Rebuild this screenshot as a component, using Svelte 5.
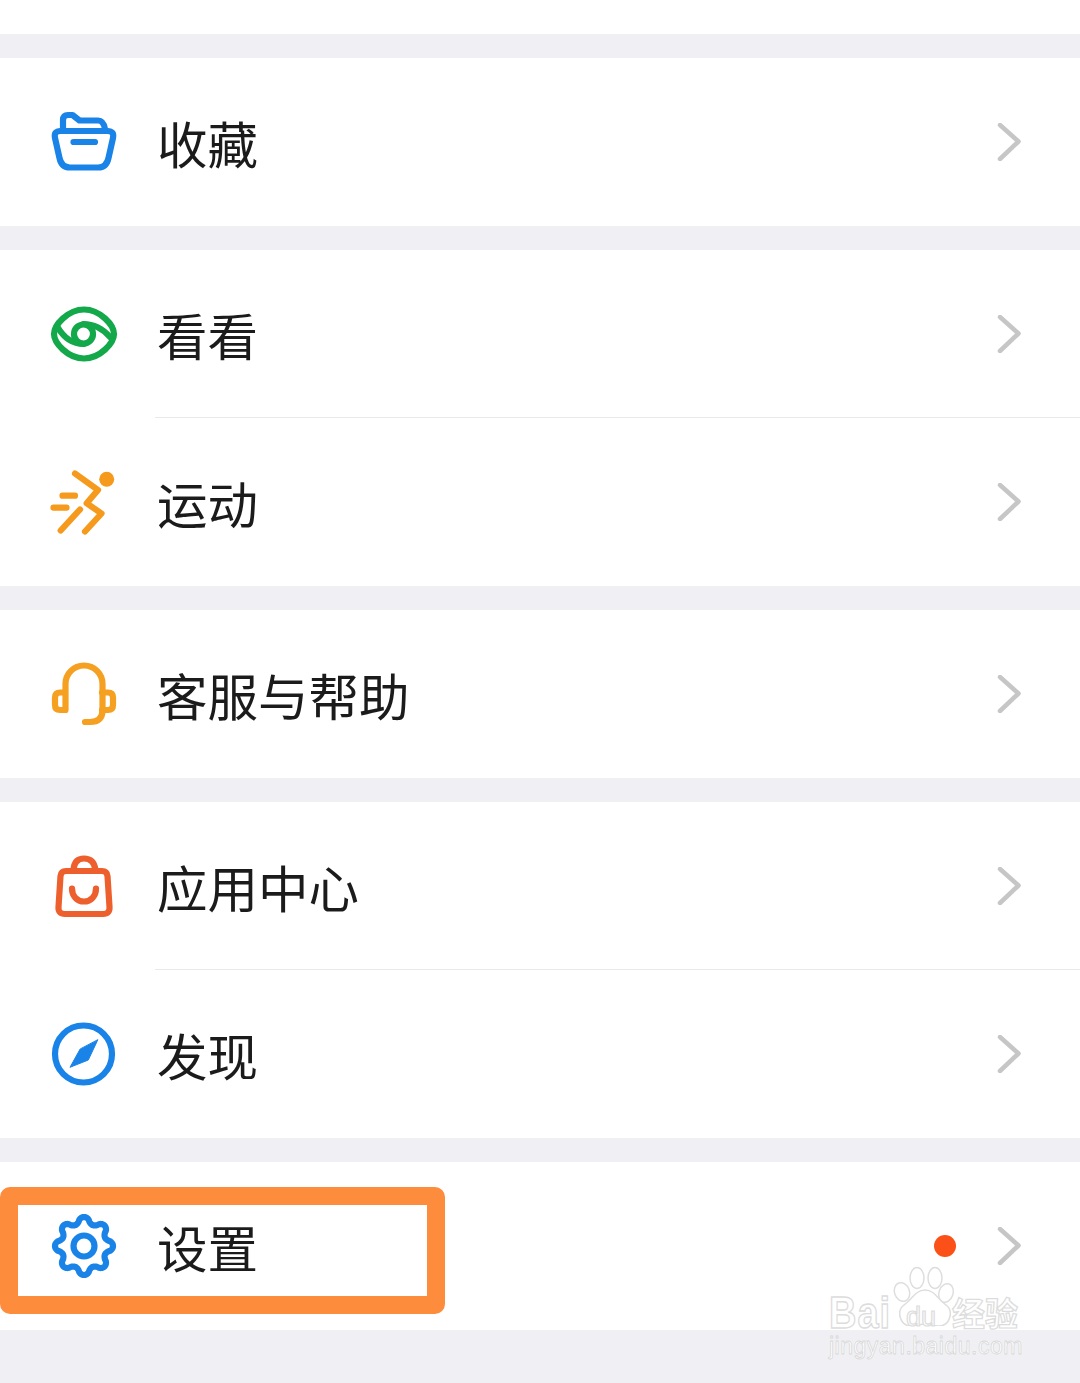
<script>
  // gear outline: 8 soft teeth around the centre of a 68 box
  let gear = "";
  for (let i = 0; i <= 240; i++) {
    const a = (i / 240) * Math.PI * 2;
    const c = Math.cos(8 * a);
    const r = 25.8 + 3.2 * Math.sign(c) * Math.pow(Math.abs(c), 0.7);
    gear += (i ? "L" : "M") + (34 + r * Math.sin(a)).toFixed(2) + " " + (34 - r * Math.cos(a)).toFixed(2);
  }
  gear += "Z";

  const groups = [
    [{ id: "fav", label: "收藏" }],
    [{ id: "eye", label: "看看" }, { id: "run", label: "运动" }],
    [{ id: "help", label: "客服与帮助" }],
    [{ id: "bag", label: "应用中心" }, { id: "compass", label: "发现" }],
    [{ id: "gear", label: "设置", dot: true, marked: true }],
  ];
</script>

<div class="page">
  <div class="top"></div>
  {#each groups as group}
    <div class="gap"></div>
    <section>
      {#each group as item, i}
        {#if i > 0}<div class="divider"></div>{/if}
        <div class="row">
          <svg class="icon" viewBox="0 0 68 68" fill="none" stroke-width="6.2" stroke-linecap="round" stroke-linejoin="round">
            {#if item.id === "fav"}
              <g stroke="#1a83e8">
                <path d="M10.500 23H57.500Q64.500 23 63 30L58.500 50Q56.500 59.500 48 59.500H20Q11.500 59.500 9.500 50L5 30Q3.500 23 10.500 23Z" />
                <path d="M13 22V12Q13 7 18 7H22.500L29.500 12.500H48Q53.500 12.500 55 21" />
                <path d="M23.500 34H45" />
              </g>
            {:else if item.id === "eye"}
              <g stroke="#13a84a">
                <path d="M34 9.500C50 9.500 64 25 64 34C64 43 50 58.500 34 58.500C18 58.500 4 43 4 34C4 25 18 9.500 34 9.500Z" />
                <circle cx="33.500" cy="34" r="9.500" />
                <path d="M7.500 27C14 38 22 44 33.500 44" />
                <path d="M33.500 24C44 24 53 29 60 37" />
              </g>
            {:else if item.id === "run"}
              <g stroke="#f59a1c">
                <path d="M25 5.500L48 22L36.700 35.300L51.500 45.500L35 63.500" />
                <path d="M12.500 27.700H25" />
                <path d="M3.500 39.700H16.500" />
                <path d="M30 41.500L10.700 62.500" />
              </g>
              <circle cx="56.700" cy="11.300" r="7.500" fill="#f59a1c" />
            {:else if item.id === "help"}
              <g stroke="#f5a021">
                <path d="M15.500 50V24A18.500 18.500 0 0 1 52.500 24V50Q52.500 62 40 62H35" />
                <path d="M15 32.500H10Q5 32.500 5 37.500V45Q5 50 10 50H15" />
                <path d="M52 32.500H58Q63 32.500 63 37.500V45Q63 50 58 50H52" />
              </g>
            {:else if item.id === "bag"}
              <g stroke="#ee5f2e">
                <path d="M16 19H52Q57 19 57.500 24L59.500 55Q60 62 53 62H15Q8 62 8.500 55L10.500 24Q11 19 16 19Z" />
                <path d="M23.500 18C24 10 28 6.500 34 6.500C40 6.500 44.500 10 45.500 18" />
                <path d="M22 36.500C22 44 27 49.500 34 49.500C41 49.500 46 44 46 36.500" />
              </g>
            {:else if item.id === "compass"}
              <circle cx="33.500" cy="34" r="28.500" stroke="#1a83e8" />
              <path d="M47.700 20L38.300 40L20 47.300L30 29.300Z" fill="#1a83e8" stroke="#1a83e8" stroke-width="1" />
            {:else}
              <g stroke="#1a83e8">
                <path d={gear} />
                <circle cx="34" cy="34" r="10.500" />
              </g>
            {/if}
          </svg>
          <span class="label">{item.label}</span>
          {#if item.dot}<span class="dot"></span>{/if}
          <svg class="chevron" viewBox="0 0 26 38" fill="none" stroke="#c6c6c6" stroke-width="4.500" stroke-linecap="round" stroke-linejoin="round">
            <path d="M4 2L22.500 18.500L4 36" />
          </svg>
          {#if item.marked}<div class="mark"></div>{/if}
        </div>
      {/each}
    </section>
  {/each}
  <div class="bottom"></div>

  <div class="watermark">
    <svg class="paw" viewBox="0 0 66 60" fill="#fff" stroke="#dedede" stroke-width="1.500">
      <ellipse cx="10" cy="26" rx="7.500" ry="9.500" transform="rotate(-20 10 26)" />
      <ellipse cx="25" cy="12" rx="7" ry="10.500" />
      <ellipse cx="43" cy="12" rx="7" ry="10.500" />
      <ellipse cx="54" cy="27" rx="7" ry="9.500" transform="rotate(20 54 27)" />
      <path d="M33 24C23 24 20 34 12 39C4 45 8 60 19 60C25 60 28 58 33 58C38 58 41 60 47 60C58 60 62 45 54 39C46 34 43 24 33 24Z" />
    </svg>
    <span class="wm-baidu">Bai</span>
    <span class="wm-du">du</span>
    <span class="wm-cn">经验</span>
    <span class="wm-url">jingyan.baidu.com</span>
  </div>
</div>

<style>
  :global(body) {
    margin: 0;
  }

  .page {
    position: relative;
    width: 1080px;
    height: 1383px;
    overflow: hidden;
    background: #f0f0f4;
    font-family: "Noto Sans CJK SC", "Noto Sans", sans-serif;
  }

  .top {
    height: 34px;
    background: #fff;
  }

  .gap {
    height: 24px;
  }

  section {
    background: #fff;
  }

  .row {
    position: relative;
    display: flex;
    align-items: center;
    height: 168px;
    padding: 0 58px 0 50px;
    box-sizing: border-box;
  }

  .divider {
    height: 1px;
    margin: 0 0 -1px 155px;
    background: #e9e9e9;
    position: relative;
    top: -1px;
  }

  .icon {
    flex: none;
    width: 68px;
    height: 68px;
  }

  .label {
    margin: -1px 0 0 39px;
    font-size: 50.500px;
    line-height: 60px;
    color: #1b1b1b;
  }

  .dot {
    width: 22px;
    height: 22px;
    margin-left: auto;
    border-radius: 50%;
    background: #fb5119;
  }

  .chevron {
    flex: none;
    width: 26px;
    height: 38px;
    margin-left: auto;
  }

  .dot + .chevron {
    margin-left: 40px;
  }

  .mark {
    position: absolute;
    left: 0;
    top: 25px;
    width: 445px;
    height: 127px;
    box-sizing: border-box;
    border: 18px solid #fd8c3c;
    border-radius: 10px;
  }

  .watermark {
    position: absolute;
    left: 826px;
    top: 1264px;
    width: 200px;
    height: 100px;
    font-family: "Liberation Sans", sans-serif;
    color: #fff;
    -webkit-text-stroke: 1.2px #dcdcdc;
  }

  .paw {
    position: absolute;
    left: 66px;
    top: 2px;
    width: 66px;
    height: 60px;
  }

  .watermark span {
    position: absolute;
    white-space: nowrap;
  }

  .wm-baidu {
    left: 3px;
    top: 25px;
    font-size: 38px;
    font-weight: 700;
    line-height: 48px;
    letter-spacing: 1px;
    transform: scaleY(1.18);
  }

  .wm-du {
    left: 80px;
    top: 38px;
    font-size: 27px;
    line-height: 30px;
  }

  .wm-cn {
    left: 126px;
    top: 28px;
    font-size: 33px;
    font-weight: 700;
    line-height: 40px;
    font-family: "Noto Sans CJK SC", sans-serif;
  }

  .wm-url {
    left: 3px;
    top: 67px;
    font-size: 23px;
    line-height: 30px;
    letter-spacing: 0.5px;
    -webkit-text-stroke: 0.8px #d8d8d8;
  }
</style>
